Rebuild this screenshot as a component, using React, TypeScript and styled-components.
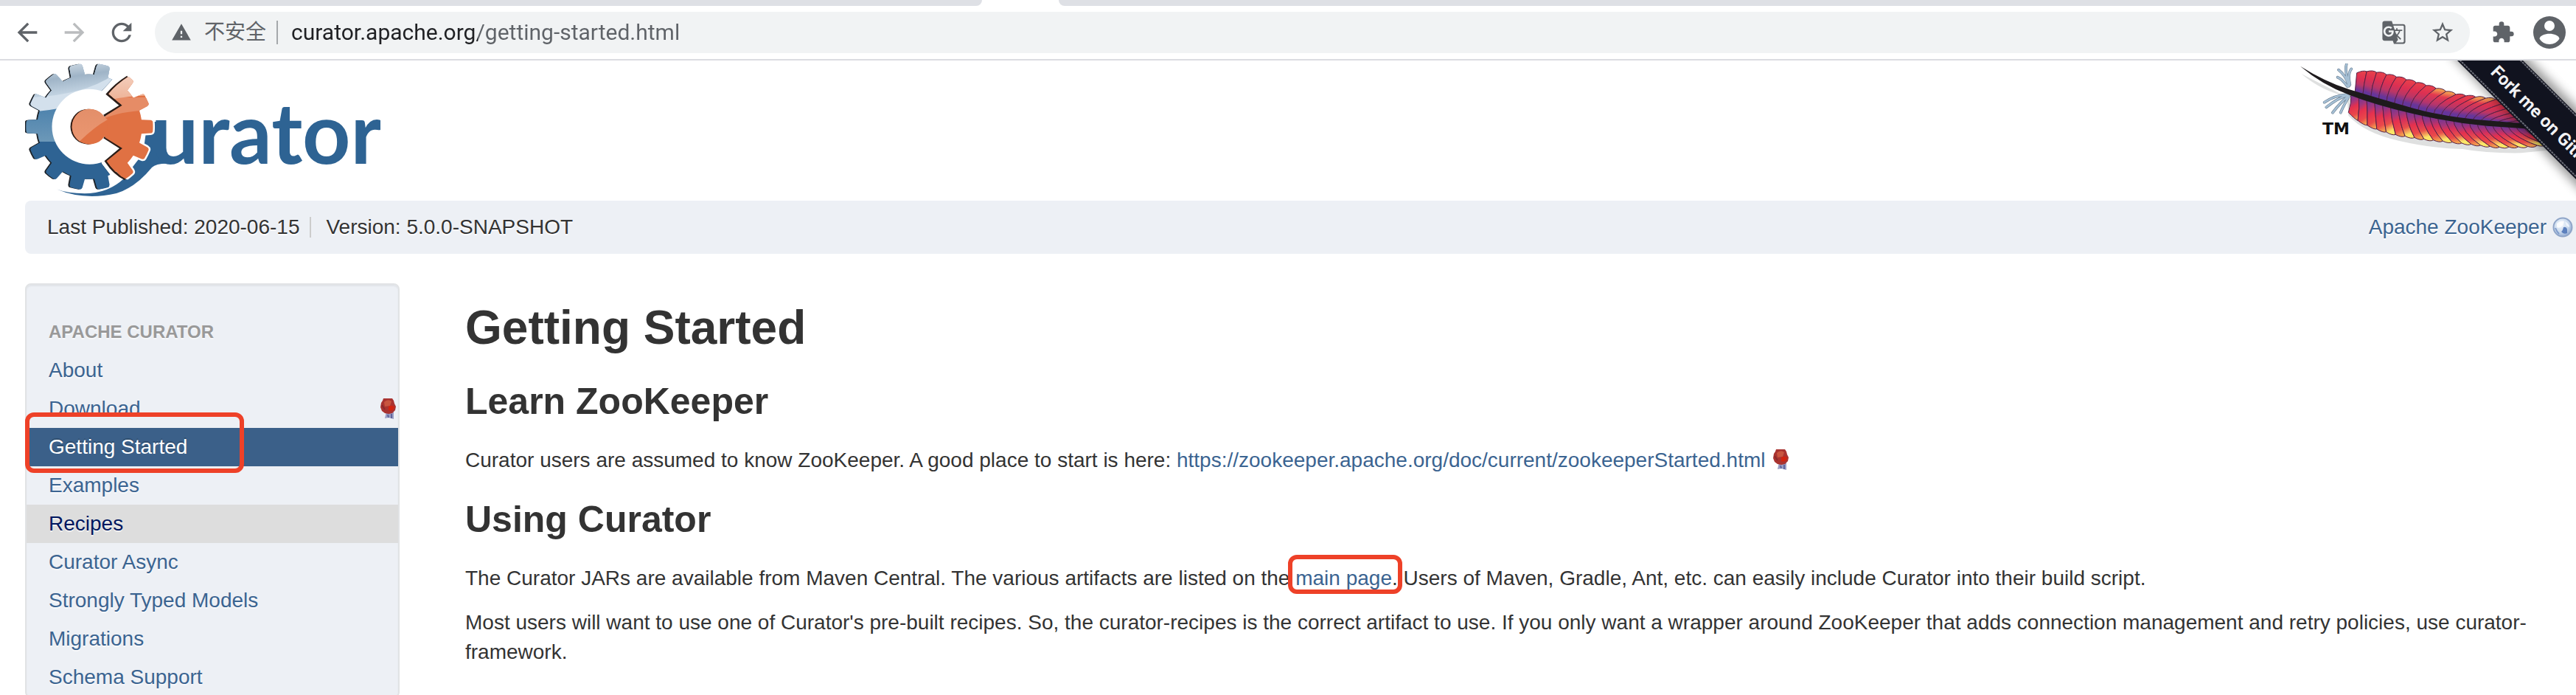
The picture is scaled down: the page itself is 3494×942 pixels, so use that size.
import React from "react";
import styled, { createGlobalStyle, css } from "styled-components";
import {
  MdArrowBack,
  MdArrowForward,
  MdExtension,
  MdGTranslate,
  MdRefresh,
  MdStarBorder,
  MdWarning,
} from "react-icons/md";

const GlobalStyle = createGlobalStyle`
  *, *::before, *::after { box-sizing: border-box; }
  body {
    margin: 0;
    background: #fff;
    color: #333;
    font-family: "Liberation Sans", Arial, sans-serif;
    font-size: 28px;
    line-height: 40px;
  }
  a { color: #3b6491; text-decoration: none; }
  svg { display: block; }
`;

const Window = styled.div`
  display: flex;
  flex-direction: column;
  height: 100vh;
  overflow: hidden;
`;

/* ---------- browser chrome ---------- */

const TabStrip = styled.div`
  display: grid;
  grid-template-columns: 1332px 1fr;
  column-gap: 104px;
  flex: none;
  height: 8px;
`;

const TabEdge = styled.div<{ $side: "left" | "right" }>`
  background: #dee0e5;
  border-radius: ${(p) => (p.$side === "left" ? "0 0 14px 0" : "0 0 0 14px")};
`;

const Toolbar = styled.header`
  display: flex;
  align-items: center;
  flex: none;
  height: 74px;
  padding: 0 14px 0 17px;
  border-bottom: 2px solid #dbdce1;
`;

const NavButtons = styled.div`
  display: flex;
  gap: 24px;
  width: 193px;
`;

const IconButton = styled.button<{ $faded?: boolean }>`
  display: flex;
  padding: 0;
  border: 0;
  background: none;
  color: ${(p) => (p.$faded ? "#babcbe" : "#5f6368")};
`;

const AddressBar = styled.form`
  display: flex;
  flex: 1;
  align-items: center;
  height: 56px;
  padding: 0 20px 0 22px;
  border-radius: 28px;
  background: #f1f3f4;
  color: #5f6368;
`;

const Security = styled.span`
  margin-left: 17px;
  padding-right: 14px;
  border-right: 2px solid #a5a8ab;
  font-family: Roboto, "Noto Sans CJK SC", sans-serif;
  line-height: 32px;
`;

const UrlInput = styled.input`
  flex: 1;
  min-width: 0;
  margin-left: 18px;
  padding: 0;
  border: 0;
  outline: 0;
  background: linear-gradient(to right, #202124 253px, #5f6368 253px);
  background-clip: text;
  color: transparent;
  font: 30px/40px Roboto, sans-serif;
`;

const BarActions = styled.div`
  display: flex;
  gap: 32px;
`;

const Extensions = styled.div`
  display: flex;
  align-items: center;
  gap: 25px;
  margin-left: 29px;
`;

/* ---------- page ---------- */

const Page = styled.div`
  position: relative;
  flex: 1;
  min-height: 0;
  overflow: hidden;
  padding: 4px 0 0 34px;
`;

const Banner = styled.div`
  display: flex;
  justify-content: space-between;
  align-items: flex-start;
  height: 186px;
`;

const ForkLink = styled.a`
  position: absolute;
  top: 0;
  right: 0;
`;

const InfoBar = styled.div`
  display: flex;
  justify-content: space-between;
  align-items: center;
  height: 72px;
  padding: 0 4px 0 30px;
  border-radius: 8px 0 0 8px;
  background: #edf0f5;
  text-shadow: 0 2px 0 #fff;
`;

const InfoList = styled.div`
  display: flex;
  align-items: center;
`;

const Published = styled.span`
  padding-right: 14px;
  margin-right: 20px;
  border-right: 2px solid #ccc;
  line-height: 28px;
`;

const ExternalLink = styled.a`
  display: flex;
  align-items: center;
  gap: 8px;
`;

const Columns = styled.div`
  display: grid;
  grid-template-columns: 508px 1fr;
  column-gap: 88px;
  margin-top: 40px;
`;

const Sidebar = styled.nav`
  padding-top: 38px;
  border: 2px solid #e1e3e5;
  border-radius: 8px;
  background: #edf0f5;
  box-shadow: inset 0 2px 2px rgba(0, 0, 0, 0.05);
  text-shadow: 0 2px 0 rgba(255, 255, 255, 0.6);
`;

const SideTitle = styled.div`
  padding: 0 30px;
  color: #999;
  font-size: 24px;
  font-weight: bold;
  line-height: 52px;
`;

const SideList = styled.ul`
  margin: 0;
  padding: 0;
  list-style: none;
`;

const SideItem = styled.li`
  position: relative;
`;

const SideLink = styled.a<{ $state?: "active" | "hover" }>`
  display: flex;
  align-items: center;
  justify-content: space-between;
  height: 52px;
  padding: 0 3px 0 30px;
  ${(p) =>
    p.$state === "active" &&
    css`
      background: #3b6089;
      color: #fff;
      text-shadow: 0 -2px 0 rgba(0, 0, 0, 0.2);
    `}
  ${(p) =>
    p.$state === "hover" &&
    css`
      background: #ddd;
      color: #00175f;
    `}
`;

const Mark = styled.span<{ $inset: string }>`
  position: absolute;
  z-index: 1;
  inset: ${(p) => p.$inset};
  border: 6px solid #ee4128;
  border-radius: 12px;
  pointer-events: none;
`;

const Marked = styled.span`
  position: relative;
`;

const Article = styled.main`
  padding: 0 20px 0 1px;
`;

const Heading = styled.h1`
  margin: 20px 0;
  font-size: 64px;
  line-height: 80px;
`;

const SubHeading = styled.h2`
  margin: 20px 0;
  font-size: 50px;
  line-height: 80px;
`;

const Paragraph = styled.p`
  margin: 0 0 20px;
`;

const InlineIcon = styled.span`
  display: inline-block;
  margin-left: 10px;
  vertical-align: -4px;
`;

/* ---------- drawings ---------- */

const CX = 87.5;
const CY = 85.7;

function gearPath(teeth: number, outer: number, root: number) {
  const step = (Math.PI * 2) / teeth;
  const at = (r: number, a: number) =>
    `${(CX + r * Math.cos(a)).toFixed(1)},${(CY + r * Math.sin(a)).toFixed(1)}`;
  let d = "";
  for (let i = 0; i < teeth; i++) {
    const a = i * step;
    d += `${i ? "L" : "M"}${at(root, a - step * 0.3)}L${at(outer - 3, a - step * 0.24)}`;
    d += `Q${at(outer, a - step * 0.22)} ${at(outer, a - step * 0.16)}`;
    d += `A${outer} ${outer} 0 0 1 ${at(outer, a + step * 0.16)}`;
    d += `Q${at(outer, a + step * 0.22)} ${at(outer - 3, a + step * 0.24)}`;
    d += `L${at(root, a + step * 0.3)}A${root} ${root} 0 0 1 ${at(root, a + step * 0.7)}`;
  }
  return d + "Z";
}

const GEAR = gearPath(14, 86, 71);

const CuratorLogo = () => (
  <svg width="482" height="180" viewBox="0 0 482 180" role="img" aria-label="Curator">
    <defs>
      <clipPath id="blueSide">
        <path d="M-4 -4H124L120 20L104 37L87 86L104 136L117 153L112 180H-4Z" />
      </clipPath>
      <clipPath id="orangeSide">
        <path d="M141 17.3Q124 28 113.2 41.3L132 56.7L109 71.3L100 86L109 100.7L132 115L110.7 132.3Q122 150 137.5 157L200 180V0Z" />
      </clipPath>
      <clipPath id="gearShape">
        <path d={GEAR} />
      </clipPath>
      <linearGradient id="sheen" x1="0" y1="0" x2="0.4" y2="1">
        <stop offset="0" stopColor="#dfe7ee" />
        <stop offset="0.5" stopColor="#9fb4c7" />
        <stop offset="1" stopColor="#c9d9e7" />
      </linearGradient>
      <linearGradient id="midSheen" x1="0" y1="0" x2="0" y2="1">
        <stop offset="0" stopColor="#4079a8" />
        <stop offset="1" stopColor="#6c98b8" />
      </linearGradient>
      <linearGradient id="disc" x1="0" y1="0" x2="0" y2="1">
        <stop offset="0" stopColor="#e38f6a" />
        <stop offset="1" stopColor="#eb9670" />
      </linearGradient>
      <linearGradient id="orangeSheen" x1="0" y1="0" x2="0" y2="1">
        <stop offset="0" stopColor="#f7dcd0" />
        <stop offset="1" stopColor="#eeb397" />
      </linearGradient>
    </defs>
    <path
      d="M43 170.5Q60 177 88 176Q114 174 133 157L160 122L166 79H184V125L196 135.7Q178 135 172 141Q150 168 124 176Q80 186 43 170.5Z"
      fill="#2e6393"
    />
    <text x="171" y="136" fill="#2e6393" fontFamily="Lato, sans-serif" fontWeight="700" fontSize="114">
      urator
    </text>
    <g clipPath="url(#blueSide)">
      <path d={GEAR} fill="#1d2227" transform="translate(-2 0)" />
      <path d={GEAR} fill="#2e6393" />
      <g clipPath="url(#gearShape)">
        <path d="M0 64Q60 56 100 40V106H0Z" fill="url(#midSheen)" />
        <path d="M0 0H130V30Q80 62 0 66Z" fill="#d3e0ec" />
        <path d="M0 0H130V8Q90 42 10 46Z" fill="url(#sheen)" />
      </g>
    </g>
    <circle cx={CX} cy={CY} r="51" fill="#fff" />
    <g clipPath="url(#orangeSide)">
      <path d={GEAR} fill="#fff" stroke="#fff" strokeWidth="5" />
    </g>
    <circle cx={CX - 2} cy={CY} r="24" fill="#2c1c16" />
    <path d="M139 18Q123 28 111.5 41.5L130 57L107 71" fill="none" stroke="#2a1d18" strokeWidth="3" />
    <path d="M107 100L130.5 115L109.5 132.5Q121 150 136 157" fill="none" stroke="#2a1d18" strokeWidth="3" />
    <g clipPath="url(#orangeSide)">
      <path d={GEAR} fill="#e07143" />
      <g clipPath="url(#gearShape)">
        <path d="M100 78Q126 64 176 63V46H104Z" fill="#e68c66" />
        <path d="M100 0H176V43Q140 44 116 49Z" fill="url(#orangeSheen)" />
      </g>
    </g>
    <circle cx={CX} cy={CY} r="24" fill="#e07143" />
    <path d="M74 105.500A24 24 0 1 1 108.500 73.800L112 76Q94 86 74 105.500Z" fill="url(#disc)" />
  </svg>
);

/* Feather outline samples, interpolated between the listed points. */
const SHAFT = [[430, 372], [560, 413], [700, 450], [850, 480], [1000, 501], [1300, 525]];
const TOP = [[465, 298], [490, 290], [540, 292], [640, 315], [760, 350], [880, 386], [1040, 405], [1160, 450], [1400, 540]];
const BOTTOM = [[430, 452], [470, 488], [530, 518], [620, 546], [740, 565], [900, 582], [1040, 598], [1160, 596], [1400, 570]];

function sample(points: number[][], x: number) {
  for (let i = 1; i < points.length; i++) {
    const [x0, y0] = points[i - 1];
    const [x1, y1] = points[i];
    if (x <= x1) return y0 + ((x - x0) / (x1 - x0)) * (y1 - y0);
  }
  return points[points.length - 1][1];
}

function barbs(edge: number[][], start: number, lean: number, bulge: number, grow: number) {
  const out: string[] = [];
  const step = 32;
  for (let x = start; x < 1240; x += step) {
    const next = x + step;
    const tipOf = (v: number) => v + lean + (v - start) * grow;
    const [a, b] = [tipOf(x), tipOf(next)];
    const [ya, yb] = [sample(edge, a), sample(edge, b)];
    const [sa, sb] = [sample(SHAFT, x), sample(SHAFT, next)];
    out.push(
      `M${x},${sa}Q${x + 4},${(sa + ya) / 2} ${a},${ya}Q${(a + b) / 2 + 6},${(ya + yb) / 2 + bulge} ${b},${yb}Q${next + 4},${(sb + yb) / 2} ${next},${sb}Z`
    );
  }
  return out;
}

const UPPER = barbs(TOP, 462, 8, -9, 0.26);
const LOWER = barbs(BOTTOM, 446, -10, 10, 0.2);

const ApacheFeather = () => (
  <svg width="374" height="134" viewBox="240 258 1122 402" role="img" aria-label="The Apache Software Foundation">
    <defs>
      <linearGradient id="upperVane" x1="0.6" y1="0" x2="0.4" y2="1">
        <stop offset="0" stopColor="#e8404a" />
        <stop offset="0.3" stopColor="#dd3052" />
        <stop offset="0.55" stopColor="#b93666" />
        <stop offset="0.8" stopColor="#65359a" />
      </linearGradient>
      <linearGradient id="upperWarm" x1="0.6" y1="0" x2="0.4" y2="1">
        <stop offset="0" stopColor="#f4a850" />
        <stop offset="0.25" stopColor="#e2384f" />
        <stop offset="0.6" stopColor="#b5356c" />
        <stop offset="0.85" stopColor="#65359a" />
      </linearGradient>
      <linearGradient id="lowerVane" x1="0.4" y1="0" x2="0.6" y2="1">
        <stop offset="0" stopColor="#65359a" />
        <stop offset="0.3" stopColor="#a1377d" />
        <stop offset="0.5" stopColor="#e5304e" />
        <stop offset="0.8" stopColor="#ea4a4a" />
        <stop offset="1" stopColor="#f3a24e" />
      </linearGradient>
      <linearGradient id="lowerWarm" x1="0.4" y1="0" x2="0.6" y2="1">
        <stop offset="0" stopColor="#65359a" />
        <stop offset="0.4" stopColor="#d8305a" />
        <stop offset="0.65" stopColor="#e8504a" />
        <stop offset="0.9" stopColor="#fbe667" />
      </linearGradient>
    </defs>
    <path
      d="M244 300Q330 372 430 392L436 470Q500 540 640 572T900 606Q1000 624 1140 622L1260 610V540L440 400Z"
      fill="#dfe0e0"
    />
    <g fill="none" stroke="#5f7386" strokeWidth="11" strokeLinecap="round">
      <path d="M438 350Q428 310 396 284M440 346Q420 290 428 262M442 344Q432 300 448 280M432 352Q410 320 392 314M430 384Q380 388 338 416M434 386Q390 400 346 436M436 390Q400 420 372 458M438 392Q416 430 404 458" />
    </g>
    <g fill="none" stroke="#a5bfd4" strokeWidth="8" strokeLinecap="round">
      <path d="M438 350Q428 310 396 284M440 346Q420 290 428 262M442 344Q432 300 448 280M432 352Q410 320 392 314M430 384Q380 388 338 416M434 386Q390 400 346 436M436 390Q400 420 372 458M438 392Q416 430 404 458" />
    </g>
    <g stroke="#571f45" strokeWidth="3">
      {UPPER.map((d, i) => (
        <path key={i} d={d} fill={i > 5 && i % 4 < 2 ? "url(#upperWarm)" : "url(#upperVane)"} />
      ))}
      {LOWER.map((d, i) => (
        <path key={i} d={d} fill={i > 3 && i % 2 === 0 ? "url(#lowerWarm)" : "url(#lowerVane)"} />
      ))}
    </g>
    <path
      d="M240 269Q340 332 440 364Q570 404 700 440T1000 490L1200 506V526L1000 512Q850 498 700 463T440 386Q330 346 240 269Z"
      fill="#1e1a1c"
    />
    <text x="330" y="546" fill="#111" fontFamily="DejaVu Sans, sans-serif" fontWeight="700" fontSize="66">
      TM
    </text>
  </svg>
);

const ForkRibbon = () => (
  <svg width="190" height="200" viewBox="3304 82 190 200" aria-hidden="true">
    <defs>
      <filter id="ribbonShadow" x="-20%" y="-20%" width="140%" height="140%">
        <feGaussianBlur stdDeviation="7" />
      </filter>
    </defs>
    <path d="M3320 70H3420L3510 160V268Z" fill="#000" opacity="0.4" filter="url(#ribbonShadow)" />
    <path d="M3321 70H3410L3510 170V259Z" fill="#11131f" />
    <path d="M3325 70L3510 255M3407 70L3510 173" stroke="#6b6d77" strokeWidth="2" strokeDasharray="3 1" />
    <text
      transform="translate(3377 99) rotate(45)"
      fill="#f2f2f4"
      fontFamily="Roboto, sans-serif"
      fontWeight="700"
      fontSize="24"
    >
      Fork me on GitHub
    </text>
  </svg>
);

const GlobeIcon = () => (
  <svg width="28" height="28" viewBox="0 0 28 28" aria-hidden="true">
    <defs>
      <radialGradient id="globe" cx="0.4" cy="0.35" r="0.7">
        <stop offset="0" stopColor="#f4f9ff" />
        <stop offset="0.6" stopColor="#c8d8ec" />
        <stop offset="1" stopColor="#8ca6d0" />
      </radialGradient>
    </defs>
    <circle cx="14" cy="14" r="12.5" fill="url(#globe)" stroke="#8fa5c8" strokeWidth="2" />
    <path d="M15 14Q19 13 20 17L20 22Q15 24 12 20Q14 19 15 14Z" fill="#5c80bd" />
    <path d="M6 9Q11 4 16 6L14 12Q9 16 6 14Z" fill="#fff" opacity="0.8" />
    <path d="M17 6Q23 9 23 14L19 12Z" fill="#eef4fc" />
    <path d="M4 15Q6 20 9 23" stroke="#7f9ccb" strokeWidth="2" fill="none" />
  </svg>
);

const SealIcon = () => (
  <svg width="22" height="28" viewBox="0 0 22 28" aria-hidden="true">
    <path d="M9 18L7 27L12 26L19 28L19 16Z" fill="#9a9dc4" />
    <path d="M11 22L12 26M16 21L16 27" stroke="#5f659c" strokeWidth="2" />
    <path d="M5 0H17L19 3L20 7L22 11L21 16L17 20L12 21L7 20L3 17L1 12L2 6L4 3Z" fill="#a93330" />
    <path d="M6 5Q11 0 16 4L14 10L7 11Z" fill="#c9553f" />
    <path d="M12 11Q18 8 20 12Q18 18 12 16Z" fill="#d3230f" />
    <path d="M3 9L7 15" stroke="#8a2a2c" strokeWidth="2" />
  </svg>
);

const AvatarIcon = () => (
  <svg width="44" height="44" viewBox="0 0 44 44" aria-hidden="true">
    <circle cx="22" cy="22" r="22" fill="#5f6368" />
    <circle cx="22" cy="13" r="7" fill="#fff" />
    <path d="M8.5 30.5C9 26 16 23.7 22 23.7S35 26 35.500 30.500C33 35 28 38 22 38S11 35 8.5 30.5Z" fill="#fff" />
  </svg>
);

/* ---------- content ---------- */

type Entry = { label: string; state?: "active" | "hover"; seal?: boolean };

const ENTRIES: Entry[] = [
  { label: "About" },
  { label: "Download", seal: true },
  { label: "Getting Started", state: "active" },
  { label: "Examples" },
  { label: "Recipes", state: "hover" },
  { label: "Curator Async" },
  { label: "Strongly Typed Models" },
  { label: "Migrations" },
  { label: "Schema Support" },
];

export default function App() {
  return (
    <Window>
      <GlobalStyle />
      <TabStrip>
        <TabEdge $side="left" />
        <TabEdge $side="right" />
      </TabStrip>
      <Toolbar>
        <NavButtons>
          <IconButton aria-label="Back"><MdArrowBack size={40} /></IconButton>
          <IconButton aria-label="Forward" $faded><MdArrowForward size={40} /></IconButton>
          <IconButton aria-label="Reload"><MdRefresh size={40} /></IconButton>
        </NavButtons>
        <AddressBar onSubmit={(e) => e.preventDefault()}>
          <MdWarning size={28} />
          <Security>不安全</Security>
          <UrlInput aria-label="Address" defaultValue="curator.apache.org/getting-started.html" />
          <BarActions>
            <IconButton type="button" aria-label="Translate"><MdGTranslate size={34} /></IconButton>
            <IconButton type="button" aria-label="Bookmark"><MdStarBorder size={34} /></IconButton>
          </BarActions>
        </AddressBar>
        <Extensions>
          <IconButton aria-label="Extensions"><MdExtension size={32} /></IconButton>
          <IconButton aria-label="Profile"><AvatarIcon /></IconButton>
        </Extensions>
      </Toolbar>
      <Page>
        <Banner>
          <CuratorLogo />
          <ApacheFeather />
        </Banner>
        <ForkLink href="#fork" aria-label="Fork me on GitHub"><ForkRibbon /></ForkLink>
        <InfoBar>
          <InfoList>
            <Published>Last Published: 2020-06-15</Published>
            <span>Version: 5.0.0-SNAPSHOT</span>
          </InfoList>
          <ExternalLink href="#zookeeper">Apache ZooKeeper <GlobeIcon /></ExternalLink>
        </InfoBar>
        <Columns>
          <Sidebar>
            <SideTitle>APACHE CURATOR</SideTitle>
            <SideList>
              {ENTRIES.map(({ label, state, seal }) => (
                <SideItem key={label}>
                  <SideLink href="#" $state={state}>
                    {label}
                    {seal && <SealIcon />}
                  </SideLink>
                  {state === "active" && <Mark $inset="-21px 209px -9px -2px" />}
                </SideItem>
              ))}
            </SideList>
          </Sidebar>
          <Article>
            <Heading>Getting Started</Heading>
            <SubHeading>Learn ZooKeeper</SubHeading>
            <Paragraph>
              Curator users are assumed to know ZooKeeper. A good place to start is here:{" "}
              <a href="#started">https://zookeeper.apache.org/doc/current/zookeeperStarted.html</a>
              <InlineIcon><SealIcon /></InlineIcon>
            </Paragraph>
            <SubHeading>Using Curator</SubHeading>
            <Paragraph>
              The Curator JARs are available from Maven Central. The various artifacts are listed on the{" "}
              <Marked>
                <a href="#main">main page</a>.<Mark $inset="-16px -6px -6px -10px" />
              </Marked>{" "}
              Users of Maven, Gradle, Ant, etc. can easily include Curator into their build script.
            </Paragraph>
            <Paragraph>
              Most users will want to use one of Curator's pre-built recipes. So, the curator-recipes is the
              correct artifact to use. If you only want a wrapper around ZooKeeper that adds connection
              management and retry policies, use curator-framework.
            </Paragraph>
          </Article>
        </Columns>
      </Page>
    </Window>
  );
}
